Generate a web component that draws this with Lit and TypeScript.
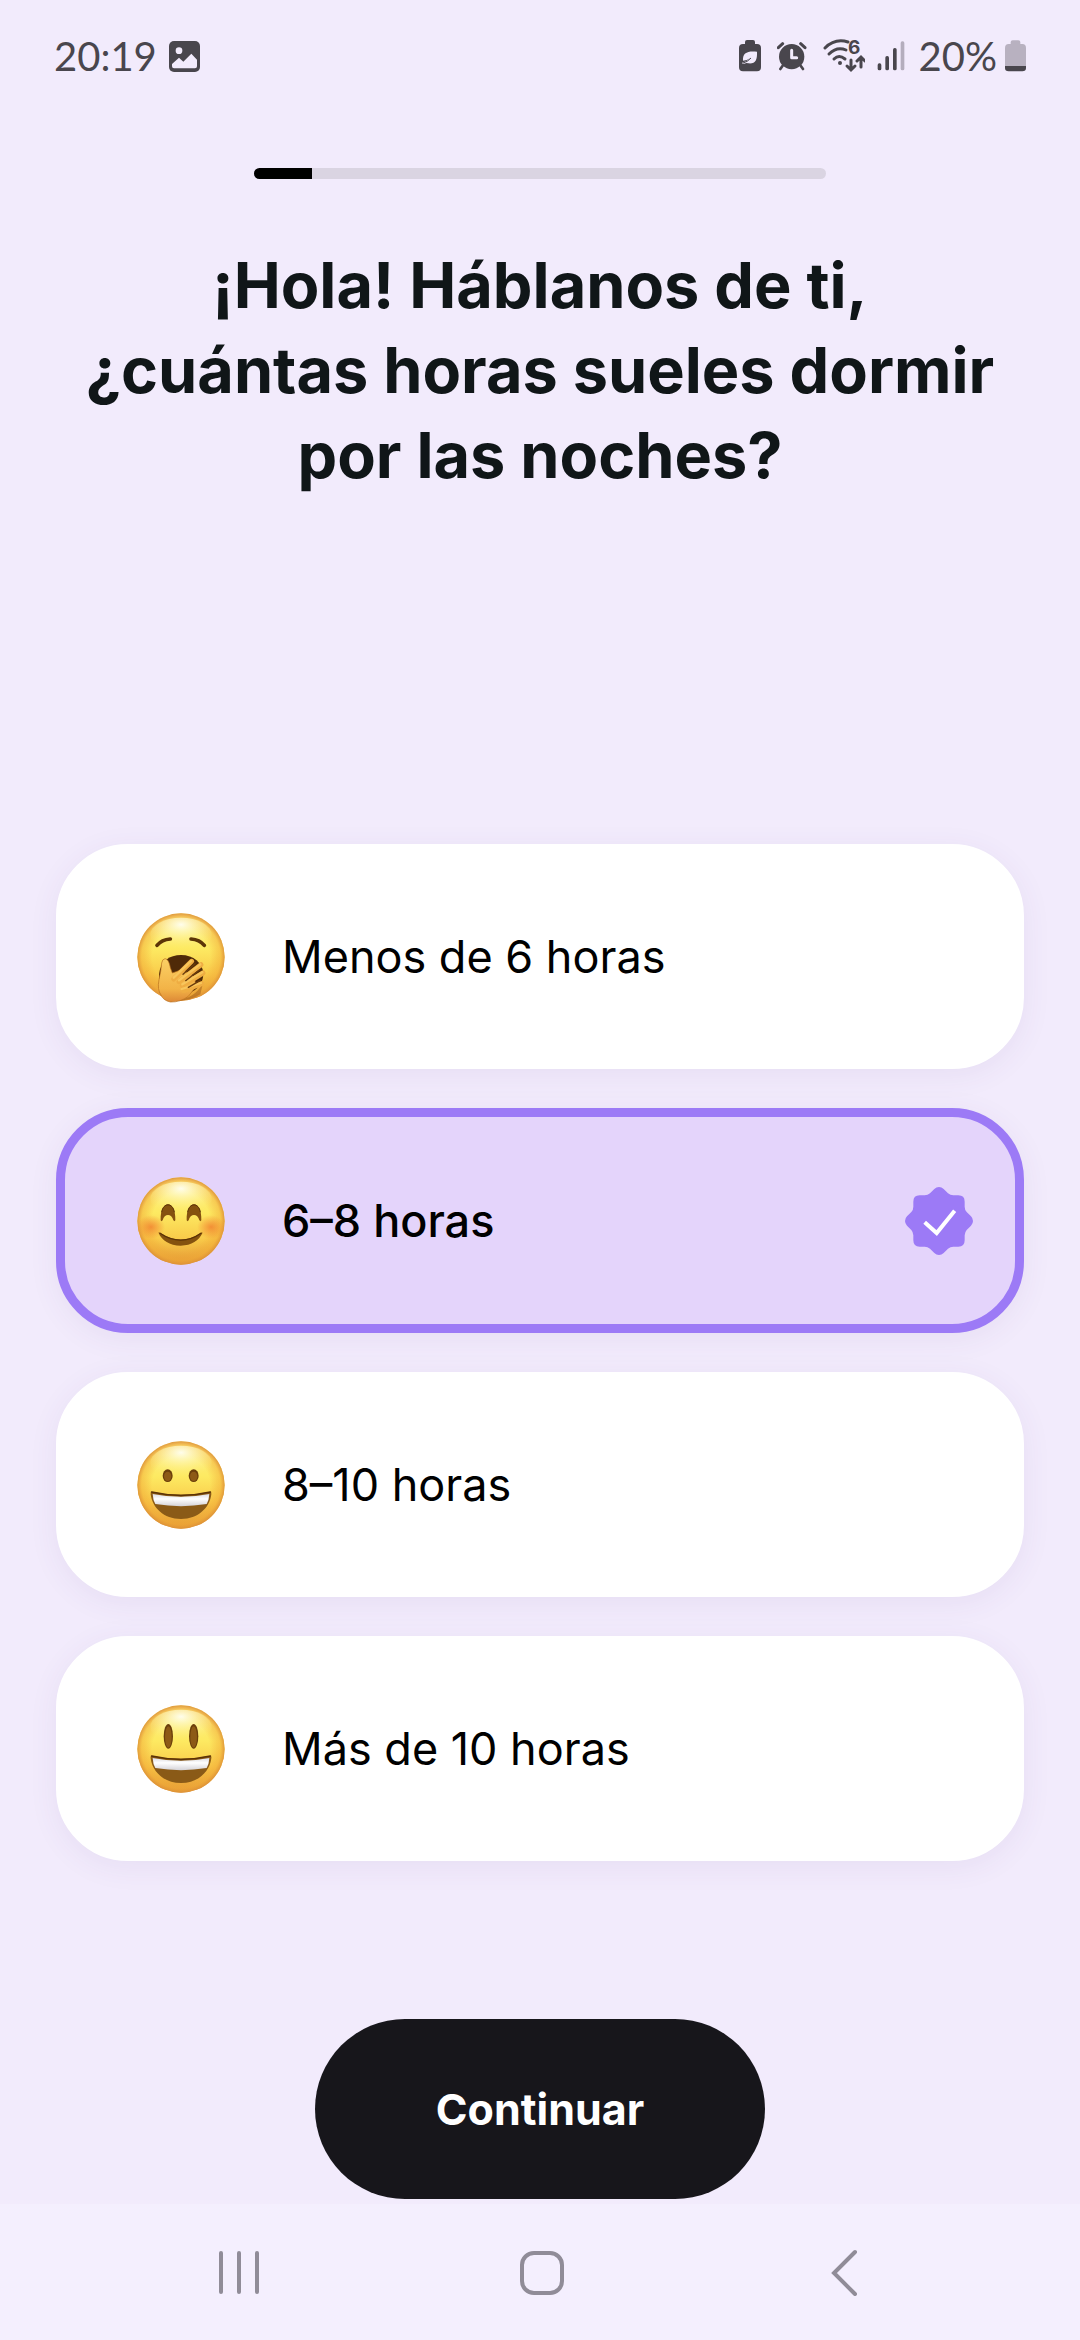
import { LitElement, html, svg, css, type SVGTemplateResult } from "lit";
import { customElement, property, state } from "lit/decorators.js";
import { classMap } from "lit/directives/class-map.js";

type Mood = "yawn" | "blush" | "grin" | "joy";

interface SleepOption {
  id: string;
  label: string;
  mood: Mood;
}

const OPTIONS: SleepOption[] = [
  { id: "lt6", label: "Menos de 6 horas", mood: "yawn" },
  { id: "6-8", label: "6–8 horas", mood: "blush" },
  { id: "8-10", label: "8–10 horas", mood: "grin" },
  { id: "gt10", label: "Más de 10 horas", mood: "joy" },
];

const openMouth = svg`
  <path d="M50 158 Q138 178 226 158 Q230 158 229 166 C224 206 190 240 138 240 C86 240 52 206 47 166 Q46 158 50 158Z" fill="#8a5a17"/>
  <path d="M53 165 Q138 182 223 165 Q222 184 215 195 Q138 208 61 195 Q54 184 53 165Z" fill="url(#teeth)"/>
  <path d="M50 159 Q138 179 226 159" fill="none" stroke="#5b3206" stroke-width="5" stroke-linecap="round"/>`;

const FEATURES: Record<Mood, SVGTemplateResult> = {
  yawn: svg`
    <path d="M66 103 Q80 86 106 84" fill="none" stroke="#5c3507" stroke-width="11" stroke-linecap="round"/>
    <path d="M168 84 Q194 86 208 103" fill="none" stroke="#5c3507" stroke-width="11" stroke-linecap="round"/>
    <path d="M72 190 C76 150 104 132 138 132 C176 132 202 156 205 186 C206 222 176 250 138 250 C98 250 70 226 72 190Z" fill="#4f2a08"/>
    <path d="M122 270 Q180 262 204 216 L196 250 Q166 270 122 270Z" fill="#a35f1c" opacity="0.55"/>
    <path d="M90 143 C98 143 103 154 106 170 L112 186 L140 176 L176 196 L184 226 L160 256 Q136 274 106 273 Q84 268 78 252 Q66 236 72 206 Q78 182 80 156 Q82 144 90 143Z" fill="url(#hand)" stroke="#b8701c" stroke-width="2"/>
    <g stroke-linecap="round" stroke="#efad42" stroke-width="15">
      <path d="M116 204 L170 151"/>
      <path d="M132 212 L198 161"/>
      <path d="M142 224 L204 186"/>
      <path d="M146 238 L200 218"/>
    </g>
    <g stroke-linecap="round" stroke="#f8c65c" stroke-width="7">
      <path d="M116 200 L168 150"/>
      <path d="M132 208 L196 160"/>
      <path d="M142 220 L202 184"/>
      <path d="M140 234 L198 216"/>
    </g>
    <g stroke-linecap="round" stroke="#6a3b0c" stroke-width="4">
      <path d="M144 190 L180 158"/>
      <path d="M152 209 L192 178"/>
      <path d="M160 229 L196 208"/>
    </g>`,
  blush: svg`
    <ellipse cx="48" cy="156" rx="42" ry="36" fill="url(#cheek)"/>
    <ellipse cx="228" cy="156" rx="42" ry="36" fill="url(#cheek)"/>
    <path d="M77 136 C75 72 123 72 121 136 Q119 141 115 136 C110 115 88 115 83 136 Q79 141 77 136Z" fill="#85520f"/>
    <path d="M155 136 C153 72 201 72 199 136 Q197 141 193 136 C188 115 166 115 161 136 Q157 141 155 136Z" fill="#85520f"/>
    <path d="M80 112 C84 82 114 82 118 112" fill="none" stroke="#5b3206" stroke-width="3"/>
    <path d="M158 112 C162 82 192 82 196 112" fill="none" stroke="#5b3206" stroke-width="3"/>
    <path d="M71 174 Q70 170 75 173 Q138 214 198 173 Q203 170 202 175 C192 196 170 212 137 212 C104 212 80 196 71 174Z" fill="#85520f"/>
    <path d="M74 174 Q138 217 199 174" fill="none" stroke="#5b3206" stroke-width="4"/>`,
  grin: svg`
    <ellipse cx="98" cy="110" rx="15" ry="19" fill="#6b3f0b"/>
    <ellipse cx="98" cy="112" rx="11" ry="14" fill="#8d5a16"/>
    <ellipse cx="176" cy="110" rx="15" ry="19" fill="#6b3f0b"/>
    <ellipse cx="176" cy="112" rx="11" ry="14" fill="#8d5a16"/>
    ${openMouth}`,
  joy: svg`
    <ellipse cx="100" cy="100" rx="14" ry="37" fill="#6b3f0b"/>
    <ellipse cx="100" cy="102" rx="10" ry="32" fill="#8d5a16"/>
    <ellipse cx="176" cy="100" rx="14" ry="37" fill="#6b3f0b"/>
    <ellipse cx="176" cy="102" rx="10" ry="32" fill="#8d5a16"/>
    ${openMouth}`,
};

@customElement("mood-face")
export class MoodFace extends LitElement {
  @property() mood: Mood = "grin";

  static styles = css`
    :host {
      display: block;
      flex: none;
      width: 92px;
      height: 92px;
    }
    .face {
      display: block;
      width: 100%;
      height: 100%;
    }
  `;

  render() {
    return html`
      <svg class="face" viewBox="0 0 276 276" aria-hidden="true">
        <defs>
          <linearGradient id="skin" x1="0" y1="0" x2="0" y2="1">
            <stop offset="0" stop-color="#fdeb86" />
            <stop offset="0.4" stop-color="#fdea62" />
            <stop offset="0.7" stop-color="#f9cb4a" />
            <stop offset="1" stop-color="#e39a36" />
          </linearGradient>
          <radialGradient id="rim" cx="0.5" cy="0.5" r="0.5">
            <stop offset="0.66" stop-color="#ee9a2e" stop-opacity="0" />
            <stop offset="0.9" stop-color="#f0a534" stop-opacity="0.45" />
            <stop offset="1" stop-color="#dc9038" stop-opacity="0.9" />
          </radialGradient>
          <radialGradient id="shine" cx="0.5" cy="0.2" r="0.7">
            <stop offset="0" stop-color="#fffff2" stop-opacity="0.95" />
            <stop offset="1" stop-color="#fff27a" stop-opacity="0" />
          </radialGradient>
          <radialGradient id="cheek">
            <stop offset="0" stop-color="#f0792c" stop-opacity="0.75" />
            <stop offset="1" stop-color="#f0792c" stop-opacity="0" />
          </radialGradient>
          <linearGradient id="teeth" x1="0" y1="0" x2="0" y2="1">
            <stop offset="0" stop-color="#dcdce2" />
            <stop offset="0.4" stop-color="#ffffff" />
            <stop offset="1" stop-color="#d5d3d8" />
          </linearGradient>
          <linearGradient id="hand" x1="0" y1="0" x2="0" y2="1">
            <stop offset="0" stop-color="#fbd065" />
            <stop offset="0.7" stop-color="#f2b347" />
            <stop offset="1" stop-color="#dd8836" />
          </linearGradient>
        </defs>
        <circle cx="138" cy="138" r="131" fill="url(#skin)" />
        <circle cx="138" cy="138" r="131" fill="url(#rim)" />
        <ellipse cx="138" cy="72" rx="92" ry="52" fill="url(#shine)" />
        ${FEATURES[this.mood]}
      </svg>
    `;
  }
}

@customElement("status-bar")
export class StatusBar extends LitElement {
  static styles = css`
    :host {
      display: flex;
      align-items: center;
      justify-content: space-between;
      height: 112px;
      padding: 0 54px;
      color: #49464d;
      font: 400 40px/48px Lato, "Liberation Sans", sans-serif;
    }
    .group {
      display: flex;
      align-items: center;
      gap: 16px;
    }
    .group.left,
    .group.network {
      gap: 12px;
    }
    .group.power {
      gap: 8px;
    }
    .icon {
      display: block;
      flex: none;
    }
    .generation {
      font: 700 19px Inter, sans-serif;
    }
  `;

  render() {
    return html`
      <div class="group left">
        <span>20:19</span>
        <svg class="icon" width="31" height="31" viewBox="0 0 93 93" aria-hidden="true">
          <rect width="93" height="93" rx="15" fill="#49464d" />
          <circle cx="30" cy="29" r="10" fill="#f2ebfc" />
          <path d="M9 69 L30 50 L43 62 L67 38 L84 56 V76 Q84 82 78 82 H15 Q9 82 9 76Z" fill="#f2ebfc" />
        </svg>
      </div>
      <div class="group">
        <svg class="icon" width="22" height="32" viewBox="0 0 66 96" aria-hidden="true">
          <path d="M18 12 V6 Q18 0 24 0 H42 Q48 0 48 6 V12 H54 Q66 12 66 24 V82 Q66 94 54 94 H12 Q0 94 0 82 V24 Q0 12 12 12Z" fill="#49464d" />
          <path d="M12 62 C10 38 26 32 54 35 C55 60 50 72 28 70 L22 69 Q16 72 9 72 L9 68 Q22 66 34 54 Q24 62 12 62Z" fill="#f2ebfc" />
          <path d="M10 70 Q26 66 36 54" fill="none" stroke="#49464d" stroke-width="3" />
        </svg>
        <svg class="icon" width="30" height="30" viewBox="0 0 90 90" aria-hidden="true">
          <circle cx="44" cy="47" r="38" fill="#49464d" />
          <path d="M4 20 L17 8 M84 20 L71 8" stroke="#49464d" stroke-width="9" stroke-linecap="round" />
          <path d="M17 74 L10 84 M71 74 L78 84" stroke="#49464d" stroke-width="8" stroke-linecap="round" />
          <path d="M44 28 V50 H59" fill="none" stroke="#f2ebfc" stroke-width="9" stroke-linecap="round" stroke-linejoin="round" />
        </svg>
        <div class="group network">
          <svg class="icon" width="42" height="48" viewBox="0 -7 42 48" aria-hidden="true">
            <g fill="none" stroke="#49464d" stroke-width="3" stroke-linecap="round">
              <path d="M2 9 Q12 -1 25 3" />
              <path d="M6 15 Q14 7 23 11" />
              <path d="M11 20 Q16 15 22 20" />
              <path d="M28 21 V30 M24 27 L28 31 L32 27" />
              <path d="M38 28 V19 M34 22 L38 18 L42 22" />
            </g>
            <circle cx="17" cy="24" r="2" fill="#49464d" />
            <text class="generation" x="25" y="15" fill="#49464d">6</text>
          </svg>
          <svg class="icon" width="30" height="30" viewBox="0 0 90 90" aria-hidden="true">
            <g fill="#49464d">
              <rect x="2" y="67" width="11" height="21" rx="5" />
              <rect x="25" y="45" width="11" height="43" rx="5" />
              <rect x="48" y="21" width="11" height="67" rx="5" />
              <rect x="71" y="1" width="11" height="87" rx="5" fill="#b4adbd" />
            </g>
          </svg>
          <div class="group power">
            <span>20%</span>
            <svg class="icon" width="21" height="32" viewBox="0 0 63 96" aria-hidden="true">
              <path d="M17 12 V6 Q17 1 23 1 H40 Q46 1 46 6 V12 H52 Q63 12 63 24 V78 H0 V24 Q0 12 11 12Z" fill="#b8b1c0" />
              <path d="M0 78 H63 V84 Q63 94 52 94 H11 Q0 94 0 84Z" fill="#49464d" />
            </svg>
          </div>
        </div>
      </div>
    `;
  }
}

@customElement("system-nav")
export class SystemNav extends LitElement {
  static styles = css`
    :host {
      display: block;
      background: #f4effe;
    }
    .keys {
      display: grid;
      grid-template-columns: repeat(3, 1fr);
      height: 136px;
      padding: 0 88px;
    }
    .key {
      display: flex;
      align-items: center;
      justify-content: center;
      padding: 0;
      border: 0;
      background: none;
      color: #908c98;
    }
    .glyph {
      display: block;
      width: 48px;
      height: 48px;
      fill: none;
      stroke: currentColor;
      stroke-width: 4;
      stroke-linecap: round;
    }
  `;

  render() {
    return html`
      <nav class="keys" aria-label="Sistema">
        <button class="key" type="button" aria-label="Recientes">
          <svg class="glyph" viewBox="0 0 48 48"><path d="M6 5 V44 M24 5 V44 M42 5 V44" /></svg>
        </button>
        <button class="key" type="button" aria-label="Inicio">
          <svg class="glyph" viewBox="0 0 48 48"><rect x="6" y="5" width="40" height="40" rx="12" /></svg>
        </button>
        <button class="key" type="button" aria-label="Atrás">
          <svg class="glyph" viewBox="0 0 48 48"><path d="M38 4 L17 25 L38 46" stroke-linejoin="miter" /></svg>
        </button>
      </nav>
    `;
  }
}

@customElement("app-root")
export class AppRoot extends LitElement {
  @state() private selected = "6-8";

  static styles = css`
    :host {
      display: flex;
      flex-direction: column;
      min-height: 100vh;
      background: #f2ebfc;
      font-family: Inter, "Liberation Sans", sans-serif;
    }
    .page {
      display: flex;
      flex: 1;
      flex-direction: column;
      align-items: center;
      padding: 56px 56px 5px;
    }
    .progress {
      width: 59%;
      height: 11px;
      border-radius: 6px;
      background: #dad4e2;
      overflow: hidden;
    }
    .progress-fill {
      height: 100%;
      background: #000;
    }
    .title {
      margin: 64px 0 0;
      color: #101618;
      font-size: 63px;
      font-weight: 700;
      line-height: 85px;
      text-align: center;
      text-wrap: balance;
    }
    .options {
      display: flex;
      flex-direction: column;
      gap: 39px;
      width: 100%;
      margin: auto 0 0;
      padding: 0;
      border: 0;
    }
    .option {
      position: relative;
      display: flex;
      align-items: center;
      gap: 55px;
      box-sizing: border-box;
      min-height: 225px;
      padding: 0 42px 0 70px;
      border: 9px solid #fff;
      border-radius: 72px;
      background: #fff;
      box-shadow: 0 6px 30px rgba(80, 50, 130, 0.07);
      color: #000;
      font-size: 45px;
      line-height: 60px;
    }
    .option.chosen {
      border-color: #9c7af6;
      background: #e4d4fb;
      font-weight: 500;
    }
    .radio {
      position: absolute;
      inset: 0;
      margin: 0;
      opacity: 0;
    }
    .label {
      flex: 1;
    }
    .badge {
      display: block;
      flex: none;
      width: 68px;
      height: 68px;
    }
    .continue {
      min-width: 450px;
      height: 180px;
      margin-top: 158px;
      border: 0;
      border-radius: 90px;
      background: #17161b;
      color: #fff;
      font: 700 43px/60px Inter, "Liberation Sans", sans-serif;
    }
  `;

  private renderOption(option: SleepOption) {
    const chosen = option.id === this.selected;
    return html`
      <label class=${classMap({ option: true, chosen })}>
        <input
          class="radio"
          type="radio"
          name="sleep"
          .checked=${chosen}
          @change=${() => (this.selected = option.id)}
        />
        <mood-face .mood=${option.mood}></mood-face>
        <span class="label">${option.label}</span>
        ${chosen
          ? html`<svg class="badge" viewBox="-102 -102 204 204" aria-hidden="true">
              <path
                fill="#9c7af6"
                d="M0 -102 Q8 -102 14 -96 L27 -83 Q34 -77 43 -77 L58 -77 Q77 -77 77 -58 L77 -43 Q77 -34 83 -27 L96 -14 Q102 -8 102 0 Q102 8 96 14 L83 27 Q77 34 77 43 L77 58 Q77 77 58 77 L43 77 Q34 77 27 83 L14 96 Q8 102 0 102 Q-8 102 -14 96 L-27 83 Q-34 77 -43 77 L-58 77 Q-77 77 -77 58 L-77 43 Q-77 34 -83 27 L-96 14 Q-102 8 -102 0 Q-102 -8 -96 -14 L-83 -27 Q-77 -34 -77 -43 L-77 -58 Q-77 -77 -58 -77 L-43 -77 Q-34 -77 -27 -83 L-14 -96 Q-8 -102 0 -102Z"
              />
              <path d="M-43 4 L-7 36 L47 -31" fill="none" stroke="#fff" stroke-width="12" />
            </svg>`
          : null}
      </label>
    `;
  }

  render() {
    return html`
      <status-bar></status-bar>
      <main class="page">
        <div class="progress" role="progressbar" aria-valuemin="0" aria-valuemax="100" aria-valuenow="10">
          <div class="progress-fill" style="width: 10%"></div>
        </div>
        <h1 class="title" id="question">
          ¡Hola! Háblanos de ti,<br />¿cuántas horas sueles dormir<br />por las noches?
        </h1>
        <fieldset class="options" aria-labelledby="question">
          ${OPTIONS.map((option) => this.renderOption(option))}
        </fieldset>
        <button class="continue" type="button">Continuar</button>
      </main>
      <system-nav></system-nav>
    `;
  }
}
